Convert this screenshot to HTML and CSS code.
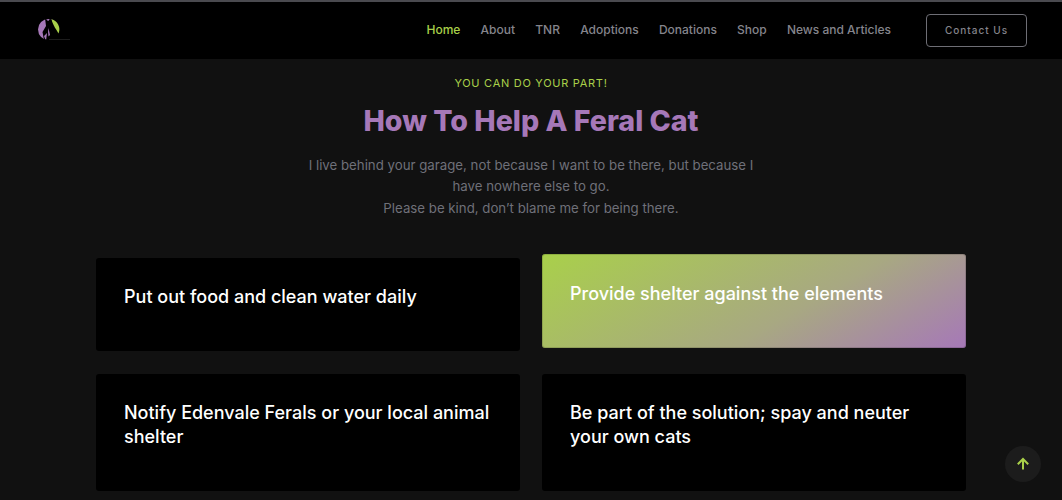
FILE: index.html
```html
<!DOCTYPE html>
<html lang="en">
<head>
<meta charset="utf-8">
<title>How To Help A Feral Cat</title>
<link rel="stylesheet" href="styles.css">
</head>
<body>
<header class="site-header">
  <a class="logo" href="#" aria-label="Edenvale Ferals">
    <svg width="36" height="26" viewBox="0 0 36 26">
      <circle cx="12.500" cy="11.500" r="10.500" fill="#a678b8"/>
      <path d="M13 1.500H23V23H13Z" fill="#000"/>
      <path d="M15.500 1.200A10.500 10.500 0 0 1 22.500 15.500C21 12 17 8 15.500 1.200Z" fill="#a9d04a"/>
      <path d="M9 0L12 3L15 1L15.500 8L18 14L17 21L14 23L10 23L11 15L8 18L9.500 22L8 22L6.500 14L10 8Z" fill="#000"/>
      <path d="M12.500 10L14 17L12.500 18.500L12 14Z" fill="#a678b8"/>
      <path d="M13 21.500H34" stroke="#1d1d1d" stroke-width="1"/>
    </svg>
  </a>
  <nav class="nav">
    <a class="nav-link active" href="#">Home</a>
    <a class="nav-link" href="#">About</a>
    <a class="nav-link" href="#">TNR</a>
    <a class="nav-link" href="#">Adoptions</a>
    <a class="nav-link" href="#">Donations</a>
    <a class="nav-link" href="#">Shop</a>
    <a class="nav-link" href="#">News and Articles</a>
  </nav>
  <a class="contact" href="#">Contact Us</a>
</header>
<main class="help">
  <p class="eyebrow">YOU CAN DO YOUR PART!</p>
  <h1 class="title">How To Help A Feral Cat</h1>
  <p class="intro">I live behind your garage, not because I want to be there, but because I have nowhere else to go.<br>Please be kind, don’t blame me for being there.</p>
  <div class="cards">
    <div class="card short"><h2>Put out food and clean water daily</h2></div>
    <div class="card short featured"><h2>Provide shelter against the elements</h2></div>
    <div class="card"><h2>Notify Edenvale Ferals or your local animal shelter</h2></div>
    <div class="card"><h2>Be part of the solution; spay and neuter your own cats</h2></div>
  </div>
</main>
<a class="to-top" href="#" aria-label="Back to top">
  <svg width="14" height="14" viewBox="0 0 14 14" fill="none" stroke="#a9d04a" stroke-width="2"><path d="M7 12.500V2M1.800 7.200L7 2l5.200 5.200"/></svg>
</a>
</body>
</html>
```
FILE: styles.css
```css
* { box-sizing: border-box; }
html, body { height: 100%; }
body {
  margin: 0;
  height: 500px;
  overflow: hidden;
  background: #111111;
  font-family: "Inter", "Liberation Sans", sans-serif;
  color: #fff;
}
a { text-decoration: none; }
.site-header {
  display: flex;
  align-items: center;
  height: 59px;
  padding: 0 35px 0 36px;
  background: #000;
  border-top: 2px solid #4a4a4f;
}
.logo { display: flex; }
.nav {
  display: flex;
  gap: 20.2px;
  margin-left: auto;
  padding-bottom: 2px;
}
.nav-link {
  color: #85858c;
  font-size: 12px;
  font-weight: 500;
  line-height: 18px;
}
.nav-link.active { color: #a9d04a; }
.contact {
  display: flex;
  align-items: center;
  justify-content: center;
  width: 101px;
  height: 33px;
  margin-left: 35px;
  padding-bottom: 2px;
  border: 1px solid #6e6e75;
  border-radius: 4px;
  color: #85858c;
  font-size: 10px;
  font-weight: 500;
  letter-spacing: 1px;
}
.help {
  padding: 0 96px;
  text-align: center;
}
.eyebrow {
  margin: 16px 0 0;
  color: #a9d04a;
  font-size: 11px;
  line-height: 16px;
  letter-spacing: 0.72px;
}
.title {
  margin: 9px 0 0;
  color: #a678b8;
  font-size: 28.6px;
  font-weight: 800;
  line-height: 42px;
}
.intro {
  width: 470px;
  margin: 13px auto 0;
  color: #6f7079;
  font-size: 13.25px;
  line-height: 21.33px;
}
.cards {
  display: grid;
  grid-template-columns: 1fr 1fr;
  gap: 22px;
  margin-top: 39px;
}
.card {
  height: 117px;
  padding: 27px 28px;
  background: #000;
  border-radius: 3px;
  text-align: left;
}
.card.short { height: 93px; }
.card h2 {
  margin: 0;
  font-size: 18px;
  font-weight: 500;
  line-height: 24.5px;
}
.card.featured {
  height: 94px;
  padding-top: 28px;
  background: linear-gradient(150deg, #a9d04a 0%, #a8a882 60%, #a678b8 100%);
  transform: translateY(-4px);
  box-shadow: inset 0 0 0 1px rgba(0,0,0,.15);
}
.to-top {
  position: fixed;
  right: 21px;
  bottom: 18px;
  display: flex;
  align-items: center;
  justify-content: center;
  width: 36px;
  height: 36px;
  border-radius: 50%;
  background: #1c1c1c;
}
```
